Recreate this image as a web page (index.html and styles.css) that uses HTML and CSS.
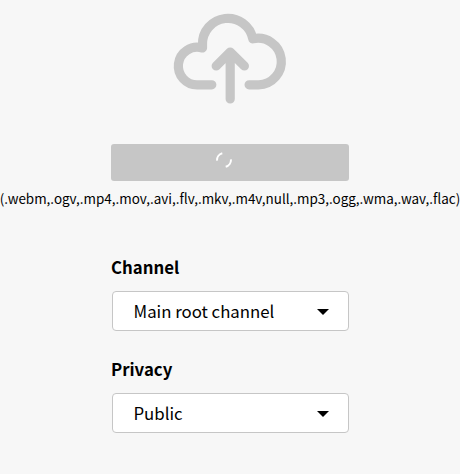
FILE: index.html
```
<!DOCTYPE html>
<html lang="en">
<head>
<meta charset="utf-8">
<title>Upload</title>
<link rel="stylesheet" href="styles.css">
</head>
<body>
<main class="upload">
  <svg class="cloud" width="116" height="94" viewBox="171.500 11.500 116 94" fill="none" stroke="#c6c6c6" stroke-width="9.2" stroke-linecap="round" stroke-linejoin="round">
    <path d="M211.300 84.300H197.500A18.800 18.800 0 1 1 202 47.500V44A25.400 25.400 0 0 1 252.300 38.300A23.300 23.300 0 1 1 258 84.300H248.600"/>
    <path d="M229.700 98.400V51.500M215.700 65.500L229.700 51.500L243.900 65.500"/>
  </svg>
  <div class="button">
    <svg class="spinner" width="16" height="16" viewBox="0 0 16 16" fill="none" stroke="#fff" stroke-width="2"><path d="M1.100 8.700A7 7 0 0 1 6.300 1.200M14.900 7.300A7 7 0 0 1 9.700 14.800"/></svg>
  </div>
  <p class="formats">(.webm,.ogv,.mp4,.mov,.avi,.flv,.mkv,.m4v,null,.mp3,.ogg,.wma,.wav,.flac)</p>
  <div class="field"><label class="label">Channel</label><div class="select"><span>Main root channel</span><i class="caret"></i></div></div>
  <div class="field"><label class="label">Privacy</label><div class="select"><span>Public</span><i class="caret"></i></div></div>
</main>
</body>
</html>
```
FILE: styles.css
```
* { box-sizing: border-box; }
body { margin: 0; background: #f7f7f7; color: #000; font-family: "Noto Sans CJK SC", sans-serif; }
.upload { display: flex; flex-direction: column; align-items: center; padding-top: 12px; }
.cloud { display: block; }
.button { width: 238px; height: 37px; margin-top: 38px; border-radius: 3px; background: #c6c6c6; display: flex; align-items: center; justify-content: center; padding: 0 12px 5px 0; }
.formats { margin: 7px 0 0; height: 20px; line-height: 20px; font-size: 13.44px; white-space: nowrap; }
.field { width: 237px; height: 102px; }
.formats + .field { margin-top: 47px; }
.label { display: block; height: 36px; margin-left: -0.5px; line-height: 24px; font-size: 16.8px; font-weight: 700; }
.select { height: 40px; display: flex; align-items: center; justify-content: space-between; padding: 0 19px 0 21px; border: 1px solid #c6c6c6; border-radius: 4px; background: #fff; font-size: 16.8px; }
.caret { margin-top: 2px; border: 6px solid transparent; border-top-color: #000; border-bottom: 0; }
```
